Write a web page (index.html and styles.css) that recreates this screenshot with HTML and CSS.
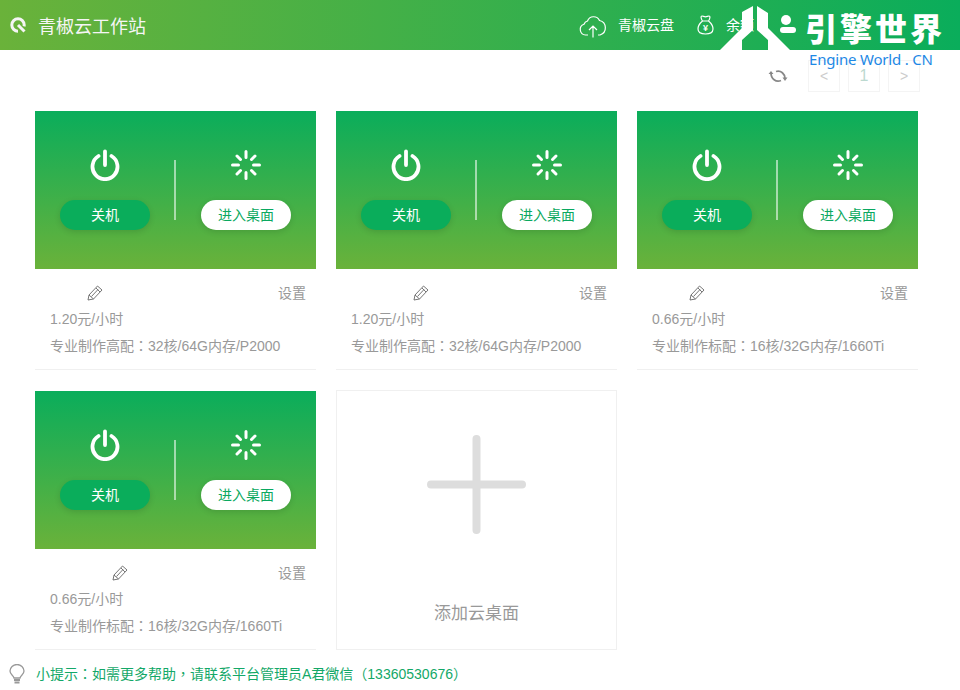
FILE: index.html
```html
<!DOCTYPE html>
<html>
<head>
	<meta charset="utf-8">
	<title>青椒云工作站</title>
	<link rel="stylesheet" href="styles.css">
</head>
<body>
	<div class="head">
		<div class="brand">
			<svg class="brand-logo" viewBox="0 0 16 16"><circle cx="8" cy="8" r="6.200" fill="none" stroke="#f5f5f5" stroke-width="3" stroke-dasharray="30 9" transform="rotate(90 8 8)"/><path d="M8 8 14.500 14.500" stroke="#f5f5f5" stroke-width="3" fill="none"/></svg>
			<span>青椒云工作站</span>
		</div>
		<div class="head-links">
			<div class="head-link">
				<svg class="icon-cloud" viewBox="0 0 30 26"><path d="M10 23H7.500A5.500 5.500 0 0 1 6 12.300 5 5 0 0 1 9.500 9 6.500 6.500 0 0 1 21.500 8.500 7.500 7.500 0 0 1 22 23H20M15 25.500V14M11 18 15 14 19 18" fill="none" stroke="#fff" stroke-width="1.200"/></svg>
				<span>青椒云盘</span>
			</div>
			<div class="head-link">
				<svg class="icon-bag" viewBox="0 0 17 20"><path d="M5.500 6C4 4 3.500 1 5 1c1.200 0 2 .8 3.500.8S10.800 1 12 1c1.500 0 1 3-.5 5M5.500 6h6M5.500 6C2.500 8.500 1 11 1 14c0 3.800 3 5 7.500 5s7.500-1.200 7.500-5c0-3-1.500-5.500-4.500-8" fill="none" stroke="#fff" stroke-width="1.200"/><text x="8.500" y="16" class="bag-mark">¥</text></svg>
				<span>余额</span>
			</div>
		</div>
	</div>

	<div class="mark">
		<svg class="mark-logo" viewBox="0 0 80 50"><path d="M0 50 22 28V12L33 6V30L22 40V50ZM37 6 48 13V28L70 50H48V40L37 30Z" fill="#fff"/><circle cx="66" cy="20" r="5" fill="#fff"/><rect x="60" y="27" width="16" height="6" rx="3" fill="#fff"/></svg>
		<div class="mark-text">
			<div class="mark-cn">引擎世界</div>
			<div class="mark-en">Engine World . CN</div>
		</div>
	</div>

	<div class="toolbar">
		<svg class="icon-refresh" viewBox="0 0 20 16"><path d="M3 5C3 11 8 14.500 13 12.500M17 10.500C17 6 13 2 8 3.500" fill="none" stroke="#888" stroke-width="1.800"/><path d="M0.500 6H5.500L3 3ZM14.500 9.500H19.500L17 13Z" fill="#888"/></svg>
		<div class="pager">&lt;</div>
		<div class="pager pager-num">1</div>
		<div class="pager">&gt;</div>
	</div>

	<div class="container">
		<div class="card">
			<div class="panel">
				<div class="col">
					<svg class="icon-state" viewBox="0 0 32 32"><use href="#power"/></svg>
					<button class="btn btn-off">关机</button>
				</div>
				<div class="divider"></div>
				<div class="col">
					<svg class="icon-state" viewBox="0 0 32 32"><use href="#spin"/></svg>
					<button class="btn btn-enter">进入桌面</button>
				</div>
			</div>
			<div class="info">
				<div class="info-top"><span class="name"></span><svg class="icon-pen" viewBox="0 0 16 16"><use href="#pen"/></svg><span class="setting">设置</span></div>
				<div class="line-price">1.20元/小时</div>
				<div class="line-spec">专业制作高配<span class="pt">：</span>32核/64G内存/P2000</div>
			</div>
		</div>

		<div class="card">
			<div class="panel">
				<div class="col">
					<svg class="icon-state" viewBox="0 0 32 32"><use href="#power"/></svg>
					<button class="btn btn-off">关机</button>
				</div>
				<div class="divider"></div>
				<div class="col">
					<svg class="icon-state" viewBox="0 0 32 32"><use href="#spin"/></svg>
					<button class="btn btn-enter">进入桌面</button>
				</div>
			</div>
			<div class="info">
				<div class="info-top"><span class="name name-long"></span><svg class="icon-pen" viewBox="0 0 16 16"><use href="#pen"/></svg><span class="setting">设置</span></div>
				<div class="line-price">1.20元/小时</div>
				<div class="line-spec">专业制作高配<span class="pt">：</span>32核/64G内存/P2000</div>
			</div>
		</div>

		<div class="card">
			<div class="panel">
				<div class="col">
					<svg class="icon-state" viewBox="0 0 32 32"><use href="#power"/></svg>
					<button class="btn btn-off">关机</button>
				</div>
				<div class="divider"></div>
				<div class="col">
					<svg class="icon-state" viewBox="0 0 32 32"><use href="#spin"/></svg>
					<button class="btn btn-enter">进入桌面</button>
				</div>
			</div>
			<div class="info">
				<div class="info-top"><span class="name"></span><svg class="icon-pen" viewBox="0 0 16 16"><use href="#pen"/></svg><span class="setting">设置</span></div>
				<div class="line-price">0.66元/小时</div>
				<div class="line-spec">专业制作标配<span class="pt">：</span>16核/32G内存/1660Ti</div>
			</div>
		</div>

		<div class="card">
			<div class="panel">
				<div class="col">
					<svg class="icon-state" viewBox="0 0 32 32"><use href="#power"/></svg>
					<button class="btn btn-off">关机</button>
				</div>
				<div class="divider"></div>
				<div class="col">
					<svg class="icon-state" viewBox="0 0 32 32"><use href="#spin"/></svg>
					<button class="btn btn-enter">进入桌面</button>
				</div>
			</div>
			<div class="info">
				<div class="info-top"><span class="name name-long"></span><svg class="icon-pen" viewBox="0 0 16 16"><use href="#pen"/></svg><span class="setting">设置</span></div>
				<div class="line-price">0.66元/小时</div>
				<div class="line-spec">专业制作标配<span class="pt">：</span>16核/32G内存/1660Ti</div>
			</div>
		</div>

		<div class="add-card">
			<svg class="plus" viewBox="0 0 99 99"><path d="M4 49.500H95M49.500 4V95" stroke="#ddd" stroke-width="8" stroke-linecap="round"/></svg>
			<div class="add-text">添加云桌面</div>
		</div>
	</div>

	<div class="tip">
		<svg class="icon-bulb" viewBox="0 0 16 20"><path d="M5 14C4.500 11.500 1 10.500 1 7A7 6.500 0 0 1 15 7C15 10.500 11.500 11.500 11 14Z" fill="none" stroke="#999" stroke-width="1.300"/><path d="M5 16H11M5.500 18.500H10.500" stroke="#999" stroke-width="1.800"/></svg>
		<span>小提示<span class="pt">：</span>如需更多帮助<span class="pt">，</span>请联系平台管理员A君微信（13360530676）</span>
	</div>

	<svg class="defs" width="0" height="0">
		<defs>
			<g id="power" fill="none" stroke="#fff" stroke-width="3.800" stroke-linecap="round">
				<path d="M16 2.500V16"/>
				<path d="M9.500 7A12.500 12.500 0 1 0 22.500 7"/>
			</g>
			<g id="spin" fill="none" stroke="#fff" stroke-width="3" stroke-linecap="round">
				<path d="M16 2.500V8.500M16 23.500V29.500M2.500 16H8.500M23.500 16H29.500M7 7 10.500 10.500M21.500 21.500 25 25M7 25 10.500 21.500M21.500 10.500 25 7"/>
			</g>
			<g id="pen" fill="none" stroke="#666" stroke-width="0.900">
				<path d="M1 15 2 10 10.500 1 15 5 6.500 14ZM2 10 6.500 14M9 3 13 7M4.500 11.500 11 4.500"/>
			</g>
		</defs>
	</svg>
</body>
</html>
```

FILE: styles.css
```css
body {
	margin: 0;
	background-color: #fff;
	font-family: "Liberation Sans", "Noto Sans CJK SC", sans-serif;
	font-size: 14px;
	color: #999;
	overflow: hidden;
}
.defs {
	position: absolute;
}
.pt {
	font-family: "Noto Sans CJK TC", sans-serif;
}
.head {
	height: 50px;
	display: flex;
	justify-content: space-between;
	align-items: center;
	background: linear-gradient(to right, #6ab23a, #0aad5b);
	color: #fff;
}
.brand {
	display: flex;
	align-items: center;
	padding-left: 10px;
	font-size: 18px;
	color: #f5f5f5;
}
.brand-logo {
	width: 16px;
	height: 16px;
	margin-right: 12px;
}
.head-links {
	display: flex;
	width: 382px;
}
.head-link {
	display: flex;
	align-items: center;
	margin-right: 23px;
}
.head-link span {
	margin-bottom: 2px;
}
.icon-cloud {
	width: 30px;
	height: 26px;
	margin-right: 10px;
}
.icon-bag {
	width: 17px;
	height: 20px;
	margin-right: 12px;
}
.bag-mark {
	fill: #fff;
	font-size: 9px;
	font-weight: bold;
	text-anchor: middle;
}

/* watermark over the header */
.mark {
	position: absolute;
	top: 0;
	left: 720px;
	width: 240px;
	height: 75px;
	display: flex;
}
.mark-logo {
	width: 80px;
	height: 50px;
	flex: none;
}
.mark-text {
	margin-left: 5px;
}
.mark-cn {
	margin-top: 5px;
	font-family: "Noto Sans CJK SC", sans-serif;
	font-size: 32px;
	line-height: 45px;
	height: 45px;
	font-weight: 900;
	letter-spacing: 3px;
	color: #fff;
	white-space: nowrap;
}
.mark-en {
	margin-left: 4px;
	font-family: "Noto Sans", sans-serif;
	font-size: 15px;
	line-height: 18px;
	letter-spacing: -0.2px;
	color: #1e88e5;
	white-space: nowrap;
}

.toolbar {
	display: flex;
	justify-content: flex-end;
	align-items: center;
	gap: 8px;
	padding: 10px 40px 0 0;
	height: 32px;
}
.icon-refresh {
	width: 20px;
	height: 16px;
	margin-right: 12px;
}
.pager {
	width: 30px;
	height: 30px;
	border: 1px solid #f4f4f4;
	text-align: center;
	line-height: 30px;
	font-size: 14px;
	color: #ccc;
}
.pager-num {
	font-size: 16px;
	color: #bcd9d0;
}

.container {
	display: grid;
	grid-template-columns: repeat(3, 281px);
	gap: 20px;
	padding: 18px 0 0 35px;
}
.card {
	height: 259px;
	padding-top: 1px;
}
.panel {
	height: 158px;
	display: flex;
	padding: 0 25px;
	background: linear-gradient(to bottom, #0aad5b, #6ab23a);
}
.col {
	width: 90px;
	display: flex;
	flex-direction: column;
	align-items: center;
}
.icon-state {
	width: 32px;
	height: 32px;
	margin: 38px 0 19px;
}
.divider {
	width: 2px;
	height: 60px;
	margin: 49px 25px 0 24px;
	background-color: rgba(255,255,255,0.55);
}
.btn {
	width: 90px;
	height: 30px;
	padding: 0 0 2px;
	border: 0;
	border-radius: 15px;
	font-family: inherit;
	font-size: 14px;
	box-shadow: 0 2px 6px rgba(0,0,0,0.12);
}
.btn-off {
	background-color: #0aad5b;
	color: #fff;
}
.btn-enter {
	background-color: #fff;
	color: #0aa860;
}
.info {
	box-sizing: border-box;
	height: 101px;
	padding: 0 10px 0 15px;
	border-bottom: 1px solid #f0f0f0;
}
.info-top {
	display: flex;
	align-items: center;
	height: 24px;
	padding-top: 11px;
}
.name {
	width: 37px;
}
.name-long {
	width: 62px;
}
.icon-pen {
	width: 16px;
	height: 16px;
	margin-top: 2px;
}
.setting {
	margin-left: auto;
}
.line-price {
	margin-top: 2px;
	line-height: 26px;
}
.line-spec {
	line-height: 26px;
}

.add-card {
	height: 258px;
	border: 1px solid #f0f0f0;
	display: flex;
	flex-direction: column;
	align-items: center;
}
.plus {
	width: 99px;
	height: 99px;
	margin-top: 44px;
}
.add-text {
	margin-top: 67px;
	font-size: 17px;
	line-height: 26px;
}

.tip {
	display: flex;
	align-items: center;
	margin-top: 13px;
	padding-left: 9px;
	color: #13a868;
	line-height: 20px;
}
.icon-bulb {
	width: 16px;
	height: 20px;
	margin-right: 11px;
}
```
